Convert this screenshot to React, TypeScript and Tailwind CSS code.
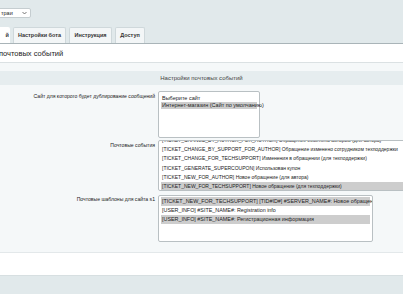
import React from "react";

const events = [
  { code: "TICKET_CHANGE_BY_AUTHOR_FOR_AUTHOR", name: "Обращение изменено автором (для автора)" },
  { code: "TICKET_CHANGE_BY_SUPPORT_FOR_AUTHOR", name: "Обращение изменено сотрудником техподдержки" },
  { code: "TICKET_CHANGE_FOR_TECHSUPPORT", name: "Изменения в обращении (для техподдержки)" },
  { code: "TICKET_GENERATE_SUPERCOUPON", name: "Использован купон" },
  { code: "TICKET_NEW_FOR_AUTHOR", name: "Новое обращение (для автора)" },
  { code: "TICKET_NEW_FOR_TECHSUPPORT", name: "Новое обращение (для техподдержки)", selected: true },
];

const templates = [
  { text: "[TICKET_NEW_FOR_TECHSUPPORT] [TID#ID#] #SERVER_NAME#: Новое обращение", selected: true },
  { text: "[USER_INFO] #SITE_NAME#: Registration info" },
  { text: "[USER_INFO] #SITE_NAME#: Регистрационная информация", selected: true },
];

export default function App() {
  return (
    <div className="w-[403px] h-[294px] overflow-hidden bg-[#e1e9eb] text-[#222] font-['Liberation_Sans',Arial,sans-serif]">
      {/* top bar with select */}
      <div className="h-[27px] pt-[8px]">
        <div className="ml-[-4px] flex h-[10px] w-[35px] items-center justify-between rounded-[2px] border border-[#c5cdd0] bg-white pl-[4px] pr-[3px] text-[5.5px]">
          <span>траи</span>
          <svg width="5" height="4" viewBox="0 0 5 4">
            <path d="M0.5 1 L2.5 3 L4.5 1" stroke="#555" strokeWidth="0.8" fill="none" />
          </svg>
        </div>
      </div>

      {/* tabs */}
      <div className="flex h-[17px] items-end gap-[3px] border-b border-[#a9b4b8] text-[5.5px] font-bold text-[#333]">
        <div className="flex h-[16px] w-[10px] items-center justify-end rounded-tr-[2px] bg-white pr-[1px]">й</div>
        <div className="flex h-[16px] w-[53px] items-center justify-center rounded-t-[2px] border border-b-0 border-[#cfd8db] bg-[#f3f6f7]">Настройки бота</div>
        <div className="flex h-[16px] w-[43px] items-center justify-center rounded-t-[2px] border border-b-0 border-[#cfd8db] bg-[#f3f6f7]">Инструкция</div>
        <div className="flex h-[16px] w-[30px] items-center justify-center rounded-t-[2px] border border-b-0 border-[#cfd8db] bg-[#f3f6f7]">Доступ</div>
      </div>

      {/* title */}
      <div className="flex h-[19px] items-center border-b border-[#dbe1e3] bg-white pt-[1px] text-[7.5px]">
        <span className="ml-[-1px]">почтовых событий</span>
      </div>

      {/* form */}
      <div className="h-[190px] border-b border-[#e3e8ea] bg-[#f5f8f9] pt-[8px]">
        <div className="flex h-[14px] items-center justify-center bg-[#e6edef] text-[6px] text-[#444]">
          Настройки почтовых событий
        </div>

        <div className="mt-[6px] grid grid-cols-[155px_1fr] gap-x-[3px] text-[5.1px]">
          <div className="pt-[2px] text-right">Сайт для которого будет дублирование сообщений</div>
          <div className="h-[47px] w-[102px] rounded-[2px] border border-[#b9c0c3] bg-white px-[2px] pt-[3px] text-[5.5px]">
            <div className="h-[7px] whitespace-nowrap pl-[1px] leading-[7px]">Выберите сайт</div>
            <div className="h-[7px] whitespace-nowrap bg-[#cdcdcd] pl-[1px] leading-[7px]">Интернет-магазин (Сайт по умолчанию)</div>
          </div>

          <div className="pt-[4px] text-right">Почтовые события</div>
          <div className="mt-[2px] h-[51px] w-[260px] overflow-hidden rounded-[2px] border border-[#b9c0c3] bg-white px-[2px] text-[5px]">
            <div className="mt-[-5px]">
              {events.map((e) => (
                <div
                  key={e.code}
                  className={`h-[9.2px] whitespace-nowrap pl-[1px] leading-[9.2px] ${e.selected ? "bg-[#cdcdcd]" : ""}`}
                >
                  [{e.code}] {e.name}
                </div>
              ))}
            </div>
          </div>

          <div className="mt-[4px] pt-[1px] text-right">Почтовые шаблоны для сайта s1</div>
          <div className="mt-[4px] h-[47px] w-[215px] overflow-hidden rounded-[2px] border border-[#b9c0c3] bg-white px-[2px] pt-[1px] text-[5.4px]">
            {templates.map((t, i) => (
              <div
                key={i}
                className={`h-[9px] whitespace-nowrap pl-[1px] leading-[9px] ${t.selected ? "bg-[#cdcdcd]" : ""}`}
              >
                {t.text}
              </div>
            ))}
          </div>
        </div>
      </div>

      {/* footer */}
      <div className="h-[23px] border-b border-[#d7dfe1] bg-white" />
    </div>
  );
}
